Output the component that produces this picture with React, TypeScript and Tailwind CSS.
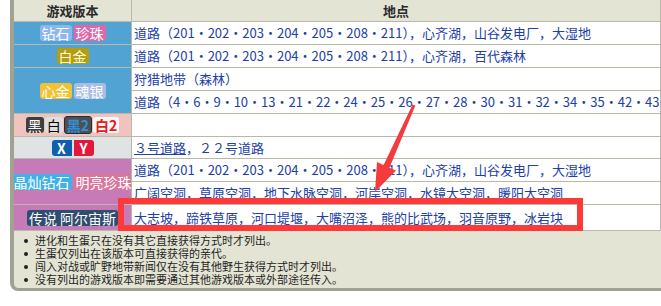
const badge = "inline-block shrink-0 whitespace-nowrap rounded-[3px] px-[2px] text-[14px] leading-[16px]";
const leftCell = "flex items-center justify-center gap-[2px] overflow-hidden";
const rightCell =
  "flex items-center bg-white px-[2px] text-[13px] text-[#2140a6] whitespace-nowrap overflow-hidden";

const ROUTES = "道路（201・202・203・204・205・208・211），心齐湖，山谷发电厂，大湿地";

const notes = [
  "进化和生蛋只在没有其它直接获得方式时才列出。",
  "生蛋仅列出在该版本可直接获得的亲代。",
  "闯入对战或旷野地带新闻仅在没有其他野生获得方式时才列出。",
  "没有列出的游戏版本即需要通过其他游戏版本或外部途径传入。",
];

export default function App() {
  return (
    <div className="relative h-[306px] w-[661px] overflow-hidden bg-white font-['Noto_Sans_CJK_SC','Liberation_Sans',sans-serif]">
      <div className="ml-[10px] w-[656px] rounded-bl-[8px] border-b-[3px] border-l-4 border-[#a2a292] bg-[#e4e4d4]">
        <div className="grid grid-cols-[117px_528px] grid-rows-[21px_22px_22px_22px_22px_22px_21px_22px_22px_25px] gap-px bg-[#b9b9a9]">
          {/* header */}
          <div className="flex items-center justify-center bg-[#e4e4d4] text-[13px] font-bold text-[#2a2a2a]">
            游戏版本
          </div>
          <div className="flex items-center justify-center bg-[#e4e4d4] text-[13px] font-bold text-[#2a2a2a]">
            地点
          </div>

          {/* 钻石 珍珠 */}
          <div className={`${leftCell} bg-[#51a3d3]`}>
            <span className={`${badge} bg-[#8db5ee] text-white`}>钻石</span>
            <span className={`${badge} bg-[#e067a6] text-white`}>珍珠</span>
          </div>
          <div className={rightCell}>{ROUTES}</div>

          {/* 白金 */}
          <div className={`${leftCell} bg-[#51a3d3]`}>
            <span className={`${badge} bg-[#b59d0c] text-[#fffbe0]`}>白金</span>
          </div>
          <div className={rightCell}>道路（201・202・203・204・205・208・211），心齐湖，百代森林</div>

          {/* 心金 魂银 */}
          <div className={`${leftCell} row-span-2 bg-[#51a3d3]`}>
            <span className={`${badge} bg-[#f2c232] text-white`}>心金</span>
            <span className={`${badge} bg-[#a9bde2] text-white`}>魂银</span>
          </div>
          <div className={rightCell}>狩猎地带（森林）</div>
          <div className={rightCell}>
            道路（4・6・9・10・13・21・22・24・25・26・27・28・30・31・32・34・35・42・43
          </div>

          {/* 黑 白 黑2 白2 */}
          <div className={`${leftCell} gap-px bg-[#f0c3bf]`}>
            <span className={`${badge} bg-[#3e3e3e] text-white`}>黑</span>
            <span className={`${badge} bg-[#dedede] text-black`}>白</span>
            <span className={`${badge} border border-[#2c2c2c] bg-[#4e4f55] font-bold text-[#2f8fdc]`}>黑2</span>
            <span className={`${badge} bg-[#f6f6f6] font-bold text-[#e0201c]`}>白2</span>
          </div>
          <div className={rightCell}></div>

          {/* X Y */}
          <div className={`${leftCell} gap-0 bg-[#dfe3e3]`}>
            <span className={`${badge} w-[20px] rounded-r-none bg-[#0f5fae] text-center font-bold text-white`}>X</span>
            <span className={`${badge} w-[20px] rounded-l-none bg-[#e2193d] text-center font-bold text-white`}>Y</span>
          </div>
          <div className={rightCell}>
            <span className="underline">３号道路</span>，２２号道路
          </div>

          {/* 晶灿钻石 明亮珍珠 */}
          <div className={`${leftCell} row-span-2 bg-[#c77ab8]`}>
            <span className={`${badge} px-0 bg-[#3fb1e6] text-white`}>晶灿钻石</span>
            <span className={`${badge} px-0 bg-[#d8769b] text-white`}>明亮珍珠</span>
          </div>
          <div className={rightCell}>{ROUTES}</div>
          <div className={rightCell}>广阔空洞，草原空洞，地下水脉空洞，河岸空洞，水镜大空洞，暖阳大空洞</div>

          {/* 传说 阿尔宙斯 */}
          <div className={`${leftCell} bg-[#c77ab8]`}>
            <span className={`${badge} bg-[#2f4e6f] text-white`}>传说 阿尔宙斯</span>
          </div>
          <div className={rightCell}>大志坡，蹄铁草原，河口堤堰，大嘴沼泽，熊的比武场，羽音原野，冰岩块</div>
        </div>

        {/* notes */}
        <ul className="border-t border-[#b9b9a9] pt-[3px] pb-[2px] pl-[8px] text-[11px] text-[#1e1e1e]">
          {notes.map((n) => (
            <li key={n} className="flex h-[13px] items-center leading-[13px]">
              <span className="mr-[7px] ml-[2px] h-[4px] w-[4px] shrink-0 rounded-full bg-[#222]" />
              {n}
            </li>
          ))}
        </ul>
      </div>

      {/* annotation: red box + arrow */}
      <div className="absolute left-[118px] top-[198px] h-[33px] w-[465px] border-[6px] border-[#fd3a3a]" />
      <svg className="absolute left-0 top-0" width="661" height="306" viewBox="0 0 661 306">
        <polygon
          points="412.6,104.4 415.4,105.6 389.4,167.7 396,170.6 375,192 377,162.1 383.6,165.1"
          fill="#f33b3b"
        />
      </svg>
    </div>
  );
}
